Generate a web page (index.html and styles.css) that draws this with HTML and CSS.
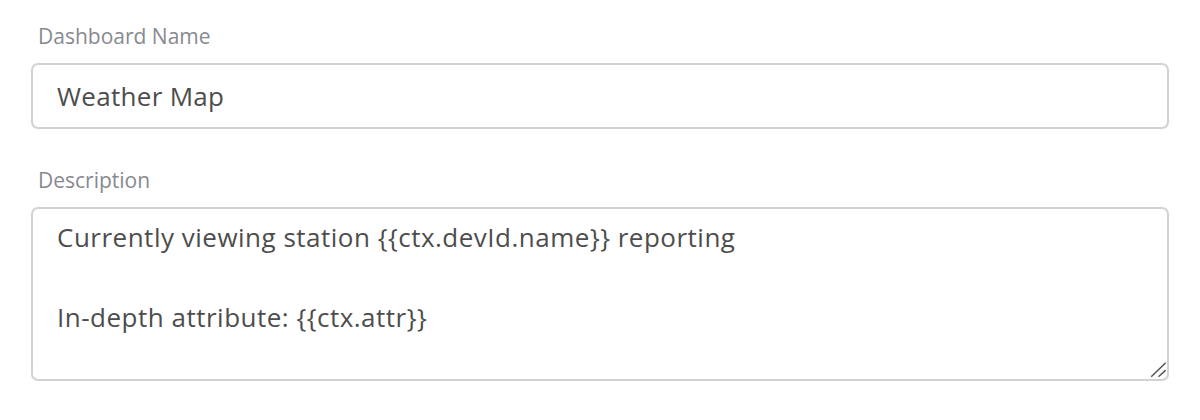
FILE: index.html
```html
<!DOCTYPE html>
<html>
<head>
<meta charset="utf-8">
<link rel="stylesheet" href="styles.css">
</head>
<body>
<div class="form">
  <div class="field">
    <label class="label">Dashboard Name</label>
    <div class="input">Weather Map</div>
  </div>
  <div class="field">
    <label class="label">Description</label>
    <div class="textarea">
      <div class="line">Currently viewing station {{ctx.devId.name}} reporting</div>
      <div class="line">&nbsp;</div>
      <div class="line">In-depth attribute: {{ctx.attr}}</div>
      <svg class="grip" width="16" height="16" viewBox="0 0 16 16"><path d="M1.7 14.3 L15.2 1.2 M9 14.3 L15.2 8.6" stroke="#555" stroke-width="1.5" stroke-linecap="round" fill="none"/></svg>
    </div>
  </div>
</div>
</body>
</html>
```
FILE: styles.css
```css
html, body { margin: 0; padding: 0; background: #fff; }
body { font-family: "Open Sans", "Noto Sans", sans-serif; }
.form { padding: 23px 31px 0 31px; display: flex; flex-direction: column; gap: 38px; }
.field { display: flex; flex-direction: column; gap: 14px; }
.label { font-size: 21px; color: #878a90; padding-left: 7px; line-height: 26px; }
.input { border: 2px solid #d2d2d2; border-radius: 7px; height: 66px; box-sizing: border-box; padding: 0 24px; display: flex; align-items: center; font-size: 26px; letter-spacing: 0.3px; color: #4d4d4d; }
.textarea { position: relative; border: 2px solid #d2d2d2; border-radius: 7px; height: 174px; box-sizing: border-box; padding: 8px 24px; font-size: 26px; letter-spacing: 0.5px; color: #4d4d4d; line-height: 40px; }
.grip { position: absolute; right: 1px; bottom: 1px; }
```
